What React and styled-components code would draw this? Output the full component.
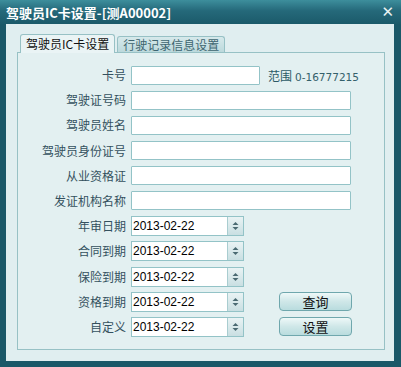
import React from 'react';
import styled, { createGlobalStyle } from 'styled-components';

const GlobalStyle = createGlobalStyle`
    html, body {
        margin: 0;
        padding: 0;
        background: #1a5566;
    }
    body {
        font-family: "Noto Sans CJK SC", "Liberation Sans", sans-serif;
        font-size: 12px;
    }
`;

const Window = styled.div`
    width: 401px;
    height: 367px;
    box-sizing: border-box;
    display: flex;
    flex-direction: column;
    background: #1a5868;
    padding: 0 7px 6px 6px;
`;

const TitleBar = styled.div`
    height: 24px;
    margin: 0 -7px 0 -6px;
    padding: 0 7px 0 6px;
    display: flex;
    align-items: center;
    justify-content: space-between;
    background: linear-gradient(#3d8e9c, #25697a 45%, #1b5a6a);
    color: #fff;
    font-weight: bold;
    font-size: 13px;
`;

const Close = styled.span`
    color: #e8f2f3;
    font-family: "DejaVu Sans", sans-serif;
    font-size: 15px;
    font-weight: bold;
`;

const Body = styled.div`
    flex: 1;
    background: #e0eef0;
    padding: 10px 9px 11px 11px;
    display: flex;
    flex-direction: column;
`;

const Tabs = styled.div`
    display: flex;
    align-items: flex-end;
    height: 18px;
    padding-left: 3px;
    gap: 2px;
`;

const Tab = styled.div`
    height: ${p => (p.$active ? '19px' : '16px')};
    box-sizing: border-box;
    padding: 0 5px;
    border: 1px solid #97c1c5;
    border-bottom: none;
    border-radius: 3px 3px 0 0;
    background: ${p => (p.$active ? '#eaf4f5' : 'linear-gradient(#d6e9eb, #bcd9dc)')};
    color: ${p => (p.$active ? '#111' : '#3e6570')};
    font-size: 12px;
    line-height: ${p => (p.$active ? '18px' : '15px')};
    position: relative;
    z-index: ${p => (p.$active ? 1 : 0)};
    margin-bottom: ${p => (p.$active ? '-1px' : '0')};
`;

const Panel = styled.div`
    flex: 1;
    border: 1px solid #97c1c5;
    background: #e3f0f1;
    padding: 12px 0 0 0;
    display: grid;
    grid-template-columns: 108px 1fr;
    column-gap: 5px;
    row-gap: 5.2px;
    align-content: start;
`;

const Label = styled.div`
    height: 20px;
    line-height: 20px;
    text-align: right;
    color: #34505e;
    font-size: 12px;
    white-space: nowrap;
`;

const Field = styled.div`
    display: flex;
    align-items: center;
    height: 20px;
`;

const Input = styled.div`
    width: ${p => p.$w}px;
    height: 19px;
    box-sizing: border-box;
    border: 1px solid #93c3c7;
    background: #fff;
    border-radius: 1px;
`;

const Hint = styled.span`
    margin-left: 8px;
    color: #2c5a66;
    font-size: 12px;
`;

const HintNum = styled.span`
    margin-left: 3px;
    font-family: "DejaVu Sans", sans-serif;
    font-size: 10.5px;
    color: #34606b;
`;

const DateBox = styled.div`
    width: 113px;
    height: 20px;
    box-sizing: border-box;
    border: 1px solid #93c3c7;
    background: #fff;
    display: flex;
`;

const DateText = styled.div`
    flex: 1;
    padding-left: 1px;
    line-height: 18px;
    font-family: "Liberation Sans", sans-serif;
    font-size: 12px;
    color: #000;
`;

const Spin = styled.div`
    width: 15px;
    border-left: 1px solid #a9cdd0;
    background: linear-gradient(#e9f3f4, #c9dfe2);
    display: flex;
    align-items: center;
    justify-content: center;
`;

const Button = styled.div`
    margin-left: 35px;
    width: 73px;
    height: 19px;
    box-sizing: border-box;
    border: 1px solid #6fa7ad;
    border-radius: 4px;
    background: linear-gradient(#eef8f8, #cfe7e8 50%, #b9dcde);
    color: #111;
    font-size: 13px;
    line-height: 17px;
    text-align: center;
`;

const SpinIcon = () => (
    <svg width="7" height="10" viewBox="0 0 7 10">
        <path d="M3.5 1 L6.5 4 L0.5 4 Z" fill="#4a6a72" />
        <path d="M3.5 9 L6.5 6 L0.5 6 Z" fill="#4a6a72" />
    </svg>
);

const textRows = ['驾驶证号码', '驾驶员姓名', '驾驶员身份证号', '从业资格证', '发证机构名称'];
const dateRows = [
    { label: '年审日期' },
    { label: '合同到期' },
    { label: '保险到期' },
    { label: '资格到期', button: '查询' },
    { label: '自定义', button: '设置' },
];

export default function App() {
    return (
        <>
            <GlobalStyle />
            <Window>
                <TitleBar>
                    <span>驾驶员IC卡设置-[测A00002]</span>
                    <Close>✕</Close>
                </TitleBar>
                <Body>
                    <Tabs>
                        <Tab $active>驾驶员IC卡设置</Tab>
                        <Tab>行驶记录信息设置</Tab>
                    </Tabs>
                    <Panel>
                        <Label>卡号</Label>
                        <Field>
                            <Input $w={129} />
                            <Hint>范围<HintNum>0-16777215</HintNum></Hint>
                        </Field>
                        {textRows.map(label => (
                            <React.Fragment key={label}>
                                <Label>{label}</Label>
                                <Field>
                                    <Input $w={220} />
                                </Field>
                            </React.Fragment>
                        ))}
                        {dateRows.map(row => (
                            <React.Fragment key={row.label}>
                                <Label>{row.label}</Label>
                                <Field>
                                    <DateBox>
                                        <DateText>2013-02-22</DateText>
                                        <Spin><SpinIcon /></Spin>
                                    </DateBox>
                                    {row.button && <Button>{row.button}</Button>}
                                </Field>
                            </React.Fragment>
                        ))}
                    </Panel>
                </Body>
            </Window>
        </>
    );
}
